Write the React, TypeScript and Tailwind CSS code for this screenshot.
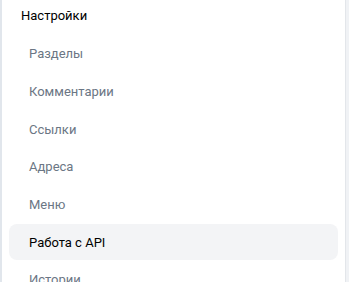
const items = ["Разделы", "Комментарии", "Ссылки", "Адреса", "Меню", "Работа с API", "Истории"];

export default function App() {
  const active = "Работа с API";
  return (
    <div className="flex h-[282px] w-[349px] overflow-hidden bg-white font-['Roboto',sans-serif] text-[13px]">
      <div className="w-[2px] shrink-0 bg-[#e1e6ec]" />
      <div className="flex-1 pl-[7px] pr-[7px]">
        <div className="flex h-[32px] items-center pl-[12px] text-black">Настройки</div>
        <div className="mt-[4px] flex flex-col gap-[1.67px]">
          {items.map((item) => (
            <div
              key={item}
              className={
                item === active
                  ? "flex h-[36px] shrink-0 items-center rounded-lg bg-[#f3f4f6] pl-[20px] text-black"
                  : "flex h-[36px] shrink-0 items-center pl-[20px] text-[#6b7684]"
              }
            >
              {item}
            </div>
          ))}
        </div>
      </div>
      <div className="w-[1px] shrink-0 bg-[#e3e6ea]" />
      <div className="w-[3px] shrink-0 bg-[#f0f2f5]" />
    </div>
  );
}
